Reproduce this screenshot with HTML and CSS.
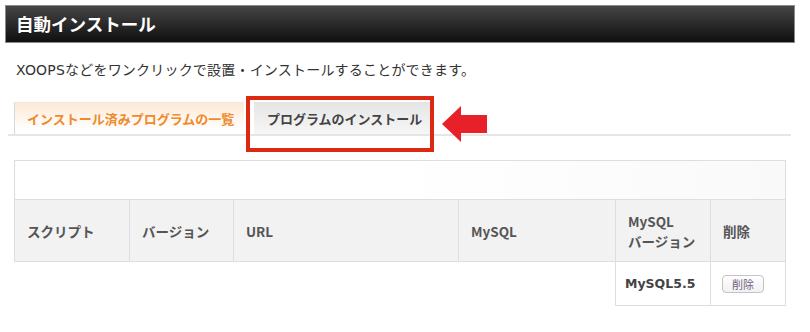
FILE: index.html
```html
<!DOCTYPE html>
<html lang="ja">
<head>
    <meta charset="UTF-8">
    <meta name="viewport" content="width=device-width, initial-scale=1.0">
    <title>自動インストール</title>
    <link rel="stylesheet" href="styles.css">
</head>
<body>

    <!-- Cabecera de la sección -->
    <div class="page">
        <h1 class="title-bar">自動インストール</h1>

        <p class="lead">XOOPSなどをワンクリックで設置・インストールすることができます。</p>

        <!-- Pestañas -->
        <div class="tabs">
            <div class="tab tab-active">インストール済みプログラムの一覧</div>
            <div class="tab tab-plain">
                プログラムのインストール
                <span class="mark-box"></span>
            </div>
            <svg class="arrow" width="45" height="36" viewBox="0 0 45 36">
                <path d="M0 18 L19 0 L19 9 L45 9 L45 27 L19 27 L19 36 Z" fill="#e8202a"/>
            </svg>
        </div>

        <!-- Tabla de programas -->
        <table class="list">
            <tr class="blank-row">
                <td colspan="6"></td>
            </tr>
            <tr class="head-row">
                <th class="c1">スクリプト</th>
                <th class="c2">バージョン</th>
                <th class="c3">URL</th>
                <th class="c4">MySQL</th>
                <th class="c5">MySQL<br>バージョン</th>
                <th class="c6">削除</th>
            </tr>
            <tr class="data-row">
                <td class="empty"></td>
                <td class="empty"></td>
                <td class="empty"></td>
                <td class="empty"></td>
                <td class="cell">MySQL5.5</td>
                <td class="cell"><button class="del-btn">削除</button></td>
            </tr>
        </table>
    </div>

</body>
</html>
```

FILE: styles.css
```css
/* Estilos generales */
body {
    margin: 0;
    background-color: white;
    font-family: "DejaVu Sans", "Noto Sans CJK JP", sans-serif;
    color: #333;
}
.page {
    padding: 5px 15px 0 5px;
}
.title-bar {
    margin: 0;
    height: 36px;
    line-height: 36px;
    padding-left: 10px;
    border: 1px solid #8a8a8a;
    background: linear-gradient(#454545, #0f0f0f);
    color: white;
    font-family: "Noto Sans CJK JP", sans-serif;
    font-size: 17.5px;
    font-weight: bold;
}
.lead {
    margin: 17px 0 0 11px;
    font-size: 14px;
    letter-spacing: 0.2px;
    line-height: 20px;
    color: #333;
}
/* Pestañas */
.tabs {
    display: flex;
    align-items: flex-end;
    margin: 22px 0 0 3px;
    padding-left: 6px;
    height: 32px;
    border-bottom: 2px solid #e6e6e6;
    width: 777px;
}
.tab {
    position: relative;
    height: 31px;
    line-height: 31px;
    font-family: "Noto Sans CJK JP", sans-serif;
    font-size: 13px;
    font-weight: bold;
}
.tab-active {
    width: 217px;
    padding-left: 12px;
    border-left: 1px solid #d8d8d8;
    border-top: 1px solid #f3e6da;
    background: linear-gradient(#fde9d6, #fff 85%);
    color: #f08a2c;
}
.tab-plain {
    margin-left: 10px;
    width: 164px;
    padding-left: 13px;
    border-top: 1px solid #e2e2e2;
    background: linear-gradient(#e6e6e6, #f6f6f6);
    color: #444;
}
/* Marco rojo de anotación */
.mark-box {
    position: absolute;
    left: -8px;
    top: -7px;
    width: 180px;
    height: 48px;
    border: 4px solid #dc2a12;
}
.arrow {
    margin: 0 0 -8px 11px;
}
/* Tabla */
.list {
    margin: 24px 0 0 9px;
    border-collapse: collapse;
    font-family: "Noto Sans CJK JP", sans-serif;
    font-size: 13.5px;
}
.blank-row td {
    height: 38px;
    padding: 0;
    border: 1px solid #dedede;
    background: linear-gradient(to right, #fff 50%, #f9f9f9);
}
.head-row th {
    height: 61px;
    padding: 0 0 0 12px;
    border: 1px solid #dedede;
    background-color: #f2f2f2;
    color: #555;
    text-align: left;
    font-weight: bold;
    line-height: 20px;
}
.c1 { width: 102px; }
.c2 { width: 91px; }
.c3 { width: 212px; }
.c4 { width: 144px; }
.c5 { width: 82px; }
.c6 { width: 62px; }
.data-row td {
    height: 43px;
    padding: 0 0 0 9px;
}
.data-row .empty {
    border: none;
}
.data-row .cell {
    border: 1px solid #dedede;
    border-top: none;
    color: #444;
    font-weight: bold;
    font-family: "DejaVu Sans", "Noto Sans CJK JP", sans-serif;
    font-size: 12.5px;
}
.del-btn {
    margin-left: 2px;
    width: 42px;
    height: 18px;
    padding: 0;
    border: 1px solid #c4c4c4;
    border-radius: 4px;
    background: linear-gradient(#fff, #f1f1f1);
    color: #6e5f7d;
    font-family: "Noto Sans CJK JP", sans-serif;
    font-size: 11px;
    line-height: 16px;
}
```
